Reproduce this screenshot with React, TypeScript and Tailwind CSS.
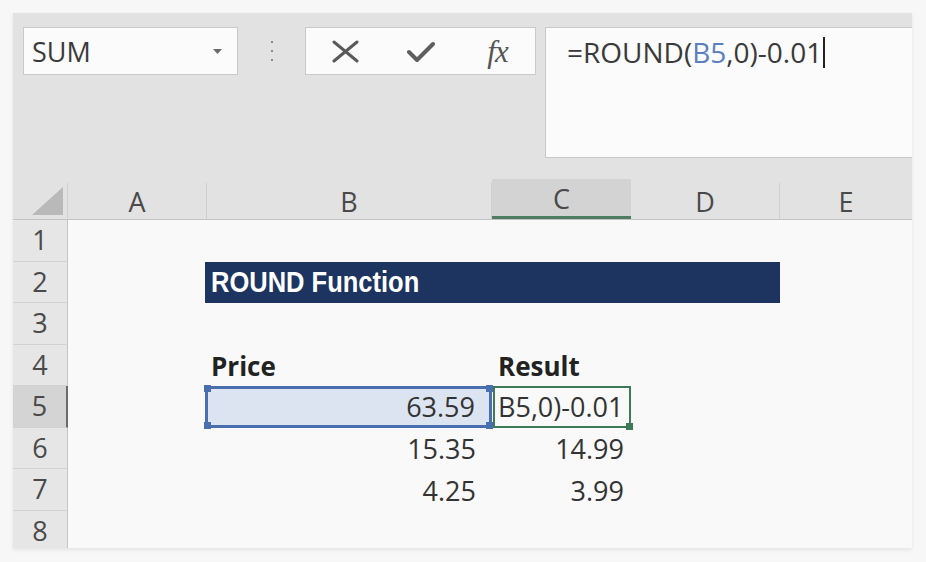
import { FC, ReactNode } from 'react';

const cols = [
  { key: 'A', w: 'w-[139px]' },
  { key: 'B', w: 'w-[285px]' },
  { key: 'C', w: 'w-[139px]' },
  { key: 'D', w: 'w-[149px]' },
  { key: 'E', w: 'w-[132px]' },
];

const font = { fontFamily: '"Open Sans", "Noto Sans", sans-serif' };

const RowHead: FC<{ n: number; active?: boolean }> = ({ n, active }) => (
  <div
    className={`w-[55px] h-full flex items-center justify-center border-b border-[#d2d2d2] ${
      active ? 'bg-[#d4d4d4] border-r-2 border-r-[#6b6b6b]' : 'bg-[#e6e6e6] border-r border-r-[#c4c4c4]'
    } text-[27px] text-[#4a4a4a]`}
  >
    {n}
  </div>
);

const Row: FC<{ n: number; active?: boolean; children?: ReactNode }> = ({ n, active, children }) => (
  <div className="flex h-[41.5px]">
    <RowHead n={n} active={active} />
    <div className="flex flex-1 h-full">{children}</div>
  </div>
);

const Handle: FC<{ pos: string; color: string }> = ({ pos, color }) => (
  <span className={`absolute w-[7px] h-[7px] ${pos} ${color}`} />
);

export default function App() {
  return (
    <div className="w-[926px] h-[562px] bg-[#f7f7f7] pt-[13px] pl-[13px]" style={font}>
      <div className="w-[899px] h-[535px] bg-[#e2e2e2] overflow-hidden shadow-[0_2px_4px_rgba(0,0,0,0.08)]">
        {/* formula bar */}
        <div className="h-[167px] flex items-start pt-[14px] pl-[10px]">
          <div className="w-[215px] h-[48px] bg-[#fbfbfb] border border-[#c9c9c9] flex items-center justify-between pl-[8px] pr-[15px]">
            <span className="text-[27px] leading-none text-[#3a3a3a]">SUM</span>
            <svg width="9" height="5" viewBox="0 0 9 5">
              <path d="M0 0 H9 L4.5 5 Z" fill="#6a6a6a" />
            </svg>
          </div>
          <div className="w-[67px] h-[48px] flex flex-col items-center justify-center gap-[7px]">
            <span className="w-[2px] h-[2px] bg-[#8a8a8a]" />
            <span className="w-[2px] h-[2px] bg-[#8a8a8a]" />
            <span className="w-[2px] h-[2px] bg-[#8a8a8a]" />
          </div>
          <div className="w-[231px] h-[48px] bg-[#fbfbfb] border border-[#c9c9c9] flex items-center">
            <div className="w-[76px] flex justify-center pl-[2px]">
              <svg width="27" height="23" viewBox="0 0 27 23">
                <path d="M2 2 L25 21 M25 2 L2 21" stroke="#5a5a5a" strokeWidth="3" strokeLinecap="round" />
              </svg>
            </div>
            <div className="w-[78px] flex justify-center">
              <svg width="28" height="23" viewBox="0 0 28 23">
                <path d="M2 12 L10 20 L26 4" stroke="#5f5f5f" strokeWidth="4" fill="none" strokeLinecap="round" strokeLinejoin="round" />
              </svg>
            </div>
            <div className="w-[75px] flex justify-center">
              <span
                className="text-[31px] italic text-[#555] leading-none tracking-[-1px]"
                style={{ fontFamily: '"Liberation Serif", serif' }}
              >
                fx
              </span>
            </div>
          </div>
          <div className="ml-[9px] flex-1 h-[131px] bg-[#fbfbfb] border-t border-l border-b border-[#c9c9c9] pl-[21px]">
            <div className="h-[48px] flex items-center text-[28px] text-[#3a3a3a]">
              <span>=ROUND(</span>
              <span className="text-[#5b7fc0]">B5</span>
              <span>,0)-0.01</span>
              <span className="w-[1.5px] h-[31px] bg-[#222] ml-[1px]" />
            </div>
          </div>
        </div>

        {/* column headers */}
        <div className="flex h-[40px] items-end border-b border-[#c3c3c3]">
          <div className="w-[55px] h-[36px] flex items-end justify-end pr-[4px] pb-[4px] border-r border-[#cfcfcf]">
            <svg width="31" height="28" viewBox="0 0 31 28">
              <path d="M31 0 V28 H0 Z" fill="#b9b9b9" />
            </svg>
          </div>
          {cols.map((c) =>
            c.key === 'C' ? (
              <div
                key={c.key}
                className={`${c.w} h-[40px] bg-[#d3d3d3] border-b-[3px] border-[#4f7d62] flex items-center justify-center text-[27px] text-[#4a4a4a] pt-[4px]`}
              >
                {c.key}
              </div>
            ) : (
              <div
                key={c.key}
                className={`${c.w} h-[36px] flex items-center justify-center text-[27px] text-[#4a4a4a] ${
                  c.key === 'E' ? '' : 'border-r border-[#cfcfcf]'
                } pt-[2px]`}
              >
                {c.key}
              </div>
            )
          )}
        </div>

        {/* grid */}
        <div className="bg-[#f9f9f9] text-[#333]">
          <Row n={1} />
          <Row n={2}>
            <div className="w-[139px]" />
            <div className="w-[575px] -ml-[2px] bg-[#1d3461] flex items-center pl-[6px]">
              <span
                className="text-[30px] font-bold text-white leading-none scale-x-[0.85] origin-left whitespace-nowrap"
                style={{ fontFamily: '"Liberation Sans", Arial, sans-serif' }}
              >
                ROUND Function
              </span>
            </div>
          </Row>
          <Row n={3} />
          <Row n={4}>
            <div className="w-[139px]" />
            <div className="w-[285px] flex items-center pl-[4px] pt-[2px] text-[26px] font-bold text-[#222]">Price</div>
            <div className="w-[139px] flex items-center pl-[6px] pt-[2px] text-[26px] font-bold text-[#222]">Result</div>
          </Row>
          <Row n={5} active>
            <div className="w-[139px]" />
            <div className="relative w-[287px] -ml-[2px] border-[3px] border-[#4a6fb0] bg-[#dde4f1] flex items-center justify-end pr-[14px] text-[27px]">
              63.59
              <Handle pos="-left-[4px] -top-[4px]" color="bg-[#4a6fb0]" />
              <Handle pos="-left-[4px] -bottom-[4px]" color="bg-[#4a6fb0]" />
              <Handle pos="-right-[4px] -top-[4px]" color="bg-[#4a6fb0]" />
              <Handle pos="-right-[4px] -bottom-[4px]" color="bg-[#4a6fb0]" />
            </div>
            <div className="relative w-[138px] ml-[1px] border-2 border-[#3f7a58] flex items-center pl-[3px] text-[27px] overflow-visible whitespace-nowrap">
              B5,0)-0.01
              <Handle pos="-right-[4px] -bottom-[4px]" color="bg-[#3f7a58]" />
            </div>
          </Row>
          <Row n={6}>
            <div className="w-[139px]" />
            <div className="w-[285px] flex items-center justify-end pr-[16px] pt-[2px] text-[27px]">15.35</div>
            <div className="w-[139px] flex items-center justify-end pr-[7px] pt-[2px] text-[27px]">14.99</div>
          </Row>
          <Row n={7}>
            <div className="w-[139px]" />
            <div className="w-[285px] flex items-center justify-end pr-[16px] pt-[2px] text-[27px]">4.25</div>
            <div className="w-[139px] flex items-center justify-end pr-[7px] pt-[2px] text-[27px]">3.99</div>
          </Row>
          <Row n={8} />
        </div>
      </div>
    </div>
  );
}
